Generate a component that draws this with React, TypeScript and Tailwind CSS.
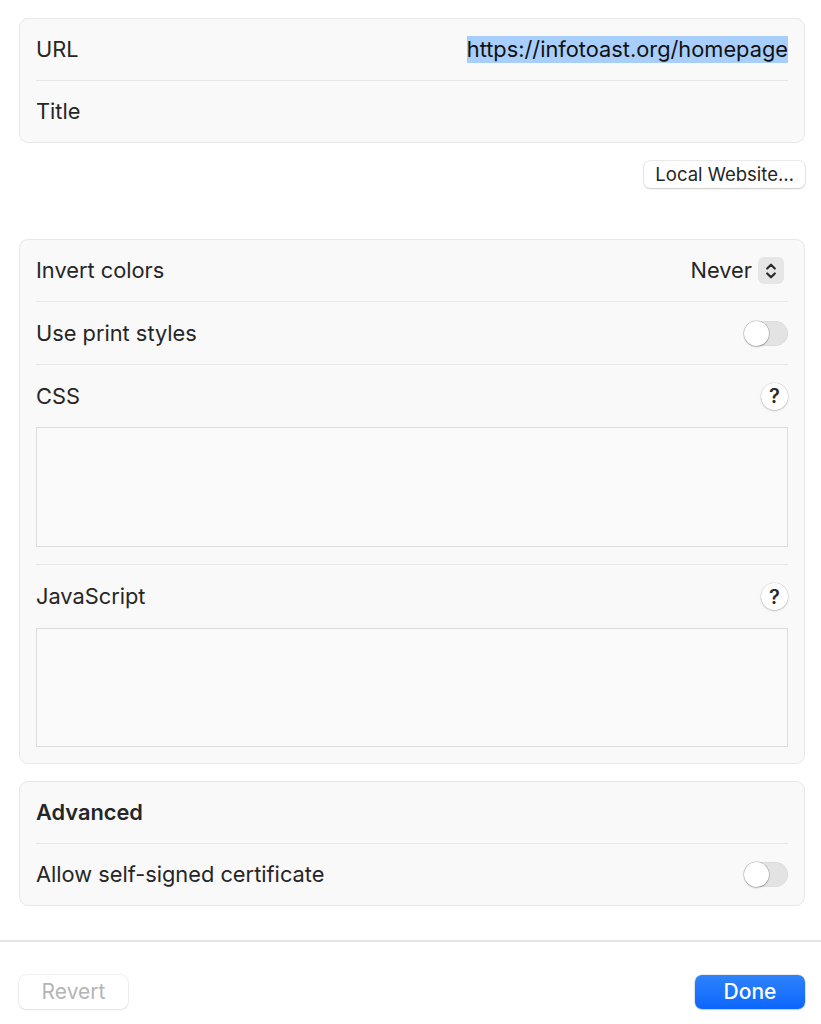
import React from "react";

const font = { fontFamily: "Inter, 'Noto Sans', 'Liberation Sans', sans-serif" };

function Toggle() {
  return (
    <div className="relative h-[25px] w-[44px] rounded-full bg-[#e3e3e3] shadow-[inset_0_0_0_0.5px_rgba(0,0,0,0.06)]">
      <div className="absolute left-0 top-0 h-[25px] w-[25px] rounded-full bg-white shadow-[0_0_0_0.5px_rgba(0,0,0,0.25),0_1px_2px_rgba(0,0,0,0.2)]" />
    </div>
  );
}

function Help() {
  return (
    <div className="flex h-[27px] w-[27px] items-center justify-center rounded-full bg-white text-[20px] font-semibold text-[#2a2a2a] shadow-[0_0_0_0.5px_rgba(0,0,0,0.12),0_1px_2px_rgba(0,0,0,0.18)]">
      ?
    </div>
  );
}

function Stepper() {
  return (
    <div className="flex h-[27px] w-[26px] items-center justify-center rounded-[6px] bg-[#e6e6e6]">
      <svg width="12" height="18" viewBox="0 0 12 18" fill="none">
        <path d="M2.2 6.5 L6 2.7 L9.8 6.5" stroke="#2a2a2a" strokeWidth="2.2" strokeLinecap="round" strokeLinejoin="round" />
        <path d="M2.2 11.5 L6 15.3 L9.8 11.5" stroke="#2a2a2a" strokeWidth="2.2" strokeLinecap="round" strokeLinejoin="round" />
      </svg>
    </div>
  );
}

function Card({ children }: { children: React.ReactNode }) {
  return (
    <div className="rounded-[9px] border border-[#e8e8e8] bg-[#f9f9f9] px-4">{children}</div>
  );
}

export default function App() {
  return (
    <div className="flex h-[1024px] w-[821px] flex-col bg-white text-[21.8px] text-[#262626]" style={font}>
      <div className="pl-[19px] pr-[16px] pt-[18px]">
        <Card>
          <div className="flex h-[62px] items-center justify-between border-b border-[#e8e8e8]">
            <span>URL</span>
            <span className="bg-[#a8cefc] leading-[27px] text-[#111]">https://infotoast.org/homepage</span>
          </div>
          <div className="flex h-[61px] items-center justify-between">
            <span>Title</span>
          </div>
        </Card>
        <div className="mt-[18px] flex justify-end">
          <button className="h-[27px] rounded-[6px] bg-white px-[11px] text-[18.5px] text-[#262626] shadow-[0_0_0_0.5px_rgba(0,0,0,0.15),0_1px_2px_rgba(0,0,0,0.15)]">
            Local Website…
          </button>
        </div>

        <div className="mt-[51px]">
          <Card>
            <div className="flex h-[62px] items-center justify-between border-b border-[#e8e8e8]">
              <span>Invert colors</span>
              <div className="flex items-center gap-[6px] pr-[4px]">
                <span>Never</span>
                <Stepper />
              </div>
            </div>
            <div className="flex h-[63px] items-center justify-between border-b border-[#e8e8e8]">
              <span>Use print styles</span>
              <Toggle />
            </div>
            <div className="border-b border-[#e8e8e8] pb-[17px]">
              <div className="flex h-[62px] items-center justify-between">
                <span>CSS</span>
                <Help />
              </div>
              <div className="h-[120px] border border-[#dcdcdc] bg-[#fafafa]" />
            </div>
            <div className="pb-[16px]">
              <div className="flex h-[63px] items-center justify-between">
                <span>JavaScript</span>
                <Help />
              </div>
              <div className="h-[119px] border border-[#dcdcdc] bg-[#fafafa]" />
            </div>
          </Card>
        </div>

        <div className="mt-[17px]">
          <Card>
            <div className="flex h-[62px] items-center justify-between border-b border-[#e8e8e8]">
              <span className="font-semibold">Advanced</span>
            </div>
            <div className="flex h-[61px] items-center justify-between">
              <span>Allow self-signed certificate</span>
              <Toggle />
            </div>
          </Card>
        </div>
      </div>

      <div className="mt-[34px] h-[2px] w-full bg-[#e5e5e5]" />

      <div className="flex justify-between pl-[19px] pr-[16px] pt-[33px]">
        <button className="h-[34px] w-[109px] rounded-[7px] bg-white text-[21px] text-[#b5b5b5] shadow-[0_0_0_0.5px_rgba(0,0,0,0.1),0_1px_2px_rgba(0,0,0,0.08)]">
          Revert
        </button>
        <button className="h-[34px] w-[110px] rounded-[7px] bg-gradient-to-b from-[#2f83fb] to-[#0b65fd] text-[21px] font-medium text-white shadow-[0_0_0_0.5px_rgba(0,0,0,0.15),0_1px_2px_rgba(0,0,0,0.15)]">
          Done
        </button>
      </div>
    </div>
  );
}
